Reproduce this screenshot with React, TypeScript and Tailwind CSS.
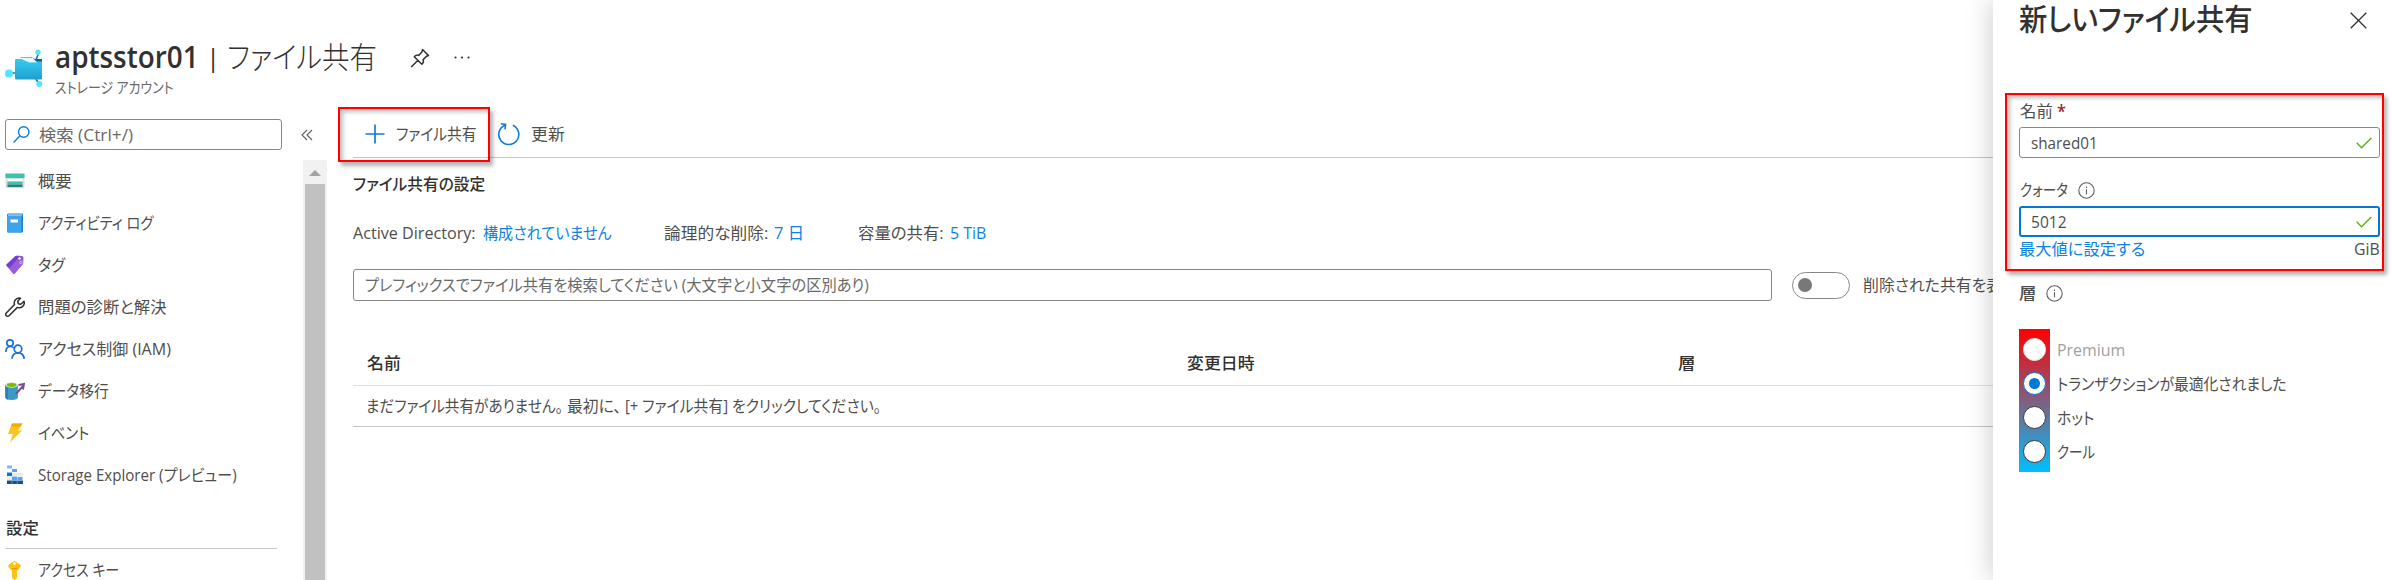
import { useLayoutEffect, useRef, useState, type ReactNode } from "react";

/** A single line of text, condensed or widened horizontally to occupy exactly `w` pixels. */
function Fit({ w, className = "", children }: { w: number; className?: string; children: string }) {
  const inner = useRef<HTMLSpanElement>(null);
  const [scale, setScale] = useState(1);
  useLayoutEffect(() => {
    const natural = inner.current!.offsetWidth;
    if (natural > 0) setScale(w / natural);
  }, [w]);
  return (
    <span className={`inline-block shrink-0 whitespace-nowrap ${className}`} style={{ width: w }}>
      <span
        ref={inner}
        className="inline-block origin-left [font-feature-settings:'palt']"
        style={{ transform: `scaleX(${scale})` }}
      >
        {children}
      </span>
    </span>
  );
}

function FolderIcon() {
  return (
    <svg className="shrink-0" width="38" height="40" viewBox="0 0 38 40">
      <defs>
        <linearGradient id="folder" x1="0" y1="0" x2="0" y2="1">
          <stop offset="0" stopColor="#35cdf2" />
          <stop offset="1" stopColor="#1f9fcf" />
        </linearGradient>
      </defs>
      <path d="M4 24h8M31 11l3-8M31 30l3 5" stroke="#1b6fb0" strokeWidth="1.6" />
      <path d="M16 8.5h11l3 1.5h7v20H12V12z" fill="#0f5ea8" />
      <path d="M15 9h12l5 6-17-1z" fill="#fff" />
      <path d="M10 11q0-1 1-1h6l5 2.500h15V29q0 1.500-1.500 1.500h-24Q10 30.500 10 29z" fill="url(#folder)" />
      <path d="M19 9h9l4 4.500h-8z" fill="#e8f8fd" />
      <circle cx="4" cy="24.500" r="4" fill="#50e6ff" />
      <circle cx="33" cy="3.300" r="2.700" fill="#50e6ff" />
      <circle cx="34.300" cy="35" r="3" fill="#50e6ff" />
    </svg>
  );
}

const Pin = () => (
  <svg width="20" height="20" viewBox="0 0 20 20" fill="none" stroke="#323130" strokeWidth="1.500" strokeLinejoin="round">
    <path d="M12.500 1.500l6 6-2 .8-3.300 3.300q.8 2.600-1.400 4.600L4.300 8.700q2-2.200 4.600-1.500l3-3.300zM8 12.300L1.200 19" />
  </svg>
);

const Info = () => (
  <svg width="17" height="17" viewBox="0 0 17 17" fill="none" stroke="#605e5c" strokeWidth="1.100">
    <circle cx="8.500" cy="8.500" r="7.700" />
    <path d="M8.500 7.300v5M8.500 4.600v1.300" />
  </svg>
);

const Check = () => (
  <svg width="16" height="12" viewBox="0 0 16 12" fill="none" stroke="#5fb01c" strokeWidth="1.500">
    <path d="M.7 5.800l4.800 4.900L15.300 1" />
  </svg>
);

const icons: Record<string, ReactNode> = {
  overview: (
    <>
      <path d="M.5 3h19v14h-19z" fill="#dcdcdc" />
      <path d="M.5 2.500h19V7h-19z" fill="#37c2b1" />
      <path d="M2.500 8h15v2.500h-15z" fill="#fff" />
      <path d="M2.500 10.500h15v3h-15z" fill="#37c2b1" />
      <path d="M2.500 13.500h15v2.500h-15z" fill="#258277" />
    </>
  ),
  log: (
    <>
      <path d="M3.500.5H17q1 0 1 1v17q0 1-1 1H3.500q-1.500 0-1.500-1.500V2Q2 .5 3.500.5z" fill="#1f7fd0" />
      <path d="M4 2.500h12.500v17H3.500q-1.500 0-1.500-1.500V3z" fill="#3ea3ea" />
      <path d="M3 1.500h14v1H3z" fill="#d8ecfa" />
      <path d="M5.500 6.500h7.500v3H5.500z" fill="#fff" />
    </>
  ),
  tag: (
    <>
      <path d="M1.500 9.500L10 1.500q.8-.7 2-.7l5 .2q1.500.1 1.500 1.500l-.2 5.500q0 1-.8 1.700l-8 9.300q-.6.600-1.200 0l-6.800-8.200q-.6-.7 0-1.300z" fill="#9a5fd6" />
      <path d="M1.500 9.500L10 1.500q.8-.7 2-.7l3 .1L4.500 13 1.500 10.800z" fill="#773adc" />
      <circle cx="14.500" cy="3.500" r="1.700" fill="#fff" stroke="#7a3fd0" strokeWidth=".8" />
      <circle cx="16" cy="7.500" r="1.300" fill="none" stroke="#d9c3f3" strokeWidth=".8" />
    </>
  ),
  wrench: (
    <path
      d="M15.500 1.200a5 5 0 0 0-6 6.300L1.300 16a1.900 1.900 0 0 0 2.700 2.700l8.400-8.300a5 5 0 0 0 6.600-6.200l-3.200 3.100-2.500-.500-.6-2.500z"
      fill="none" stroke="#323130" strokeWidth="1.500" strokeLinejoin="round"
    />
  ),
  people: (
    <g fill="none" stroke="#1a6fe0" strokeWidth="1.700">
      <circle cx="5" cy="4" r="3.200" />
      <circle cx="13" cy="10" r="3.800" />
      <path d="M.8 13q.2-5.500 4.600-5.500 2 0 3.300 1.300M7 19.800q.5-6 6-6t6.200 6" />
    </g>
  ),
  migrate: (
    <>
      <path d="M.3 4v12q0 3 6.300 3t6.300-3V4z" fill="#3a99c9" />
      <path d="M.3 4v12q0 2 2.700 2.700V4z" fill="#2e7fae" />
      <ellipse cx="6.600" cy="4" rx="6.300" ry="2.800" fill="#d6e8c0" />
      <ellipse cx="6.600" cy="4" rx="4.800" ry="1.900" fill="#7fba00" />
      <path d="M11 13l7-8M13.500 4l5.500-1-1 5.500" fill="none" stroke="#804998" strokeWidth="1.900" />
    </>
  ),
  bolt: (
    <>
      <path d="M7 .5h10.500l-4.500 7h4L5 19.500l3-8.500H3z" fill="#fcc419" />
      <path d="M7 .5h10.500l-2 3H6z" fill="#f5a900" />
    </>
  ),
  explorer: (
    <>
      <path d="M2 .5h5v3H2z" fill="#83b9f9" />
      <path d="M7 4h5v3H7z" fill="#5ea0ef" />
      <path d="M2 7.500h5v3.500H2z" fill="#0078d4" />
      <path d="M7 7.500h5V11H7zM12 8h6v3.500h-6zM2 11.500h5V15H2z" fill="#e8eaee" />
      <path d="M7 11.500h5V15H7zM12.500 12h5v3h-5z" fill="#5ea0ef" />
      <path d="M2 15.500h16V19H2z" fill="#0f5499" />
      <path d="M7 15.500v3.500M12.300 15.500v3.500" stroke="#7fb0e5" strokeWidth=".6" />
    </>
  ),
  key: (
    <>
      <path d="M9.500.8L15 4.500q.8.5.8 1.500t-.8 1.700L12 11v7l-2.500 2L7 18v-7L4 7.700Q3.200 7 3.200 6T4 4.500z" fill="#ffc20e" />
      <path d="M7 8h5v1.200H7z" fill="#e09b00" />
      <circle cx="9.500" cy="3.600" r="1.300" fill="#fff" />
    </>
  ),
};

function MenuItem({ icon, label, w }: { icon: string; label: string; w: number }) {
  return (
    <div className="flex h-[42px] shrink-0 items-center gap-[13px]">
      <svg className="shrink-0" width="20" height="20" viewBox="0 0 20 20">{icons[icon]}</svg>
      <Fit w={w}>{label}</Fit>
    </div>
  );
}

const menu = [
  { icon: "overview", label: "概要", w: 34 },
  { icon: "log", label: "アクティビティ ログ", w: 115 },
  { icon: "tag", label: "タグ", w: 27 },
  { icon: "wrench", label: "問題の診断と解決", w: 129 },
  { icon: "people", label: "アクセス制御 (IAM)", w: 133 },
  { icon: "migrate", label: "データ移行", w: 71 },
  { icon: "bolt", label: "イベント", w: 51 },
  { icon: "explorer", label: "Storage Explorer (プレビュー)", w: 199 },
];

function Sidebar() {
  return (
    <div className="flex w-[353px] shrink-0">
      <nav className="ml-[5px] flex w-[277px] flex-col pt-3">
        <div className="flex h-[31px] shrink-0 items-center gap-[9px] rounded-[3px] border border-[#8a8886] pl-[7px]">
          <svg width="17" height="17" viewBox="0 0 17 17" fill="none" stroke="#0f7bdc" strokeWidth="1.400">
            <circle cx="10.700" cy="6" r="5.200" />
            <path d="M7 9.800L.6 16.400" />
          </svg>
          <Fit w={94} className="text-[#6b6967]">検索 (Ctrl+/)</Fit>
        </div>
        <div className="mt-[10px] flex flex-col">
          {menu.map((m) => (
            <MenuItem key={m.label} {...m} />
          ))}
        </div>
        <div className="mt-[11px] mr-[5px] flex h-[42px] shrink-0 items-center border-b border-[#c8c6c4] pl-px font-medium text-[#323130]">
          <Fit w={33}>設定</Fit>
        </div>
        <MenuItem icon="key" label="アクセス キー" w={81} />
      </nav>
      <div className="ml-[19px] flex flex-col">
        <svg className="mt-[22px] shrink-0" width="12" height="12" viewBox="0 0 12 12" fill="none" stroke="#605e5c" strokeWidth="1.100">
          <path d="M6 1L1 6l5 5M11 1L6 6l5 5" />
        </svg>
        <div className="mt-[19px] ml-[2px] flex w-[24px] grow flex-col items-center bg-[#f1f1f1]">
          <svg className="mt-[10px] mb-[8px] shrink-0" width="12" height="6" viewBox="0 0 12 6">
            <path d="M0 6l6-6 6 6z" fill="#a3a3a3" />
          </svg>
          <div className="w-[20px] grow bg-[#c1c1c1]" />
        </div>
      </div>
    </div>
  );
}

function Main() {
  return (
    <main className="flex w-[1640px] shrink-0 flex-col overflow-hidden">
      <div className="flex h-[51px] shrink-0 items-center border-b border-[#c8c6c4] pl-3 pt-[3px]">
        <svg width="20" height="20" viewBox="0 0 20 20" stroke="#0f7bdc" strokeWidth="1.700">
          <path d="M10 .5v19M.5 10h19" />
        </svg>
        <Fit w={81} className="ml-[11px]">ファイル共有</Fit>
        <svg className="ml-[20px]" width="24" height="24" viewBox="0 0 24 24" fill="none" stroke="#0f7bdc" strokeWidth="1.600">
          <path d="M15.800 3.300A10 10 0 1 1 8 3.200M3.800 1.800L8.600 2.400 8 7.300" />
        </svg>
        <Fit w={34} className="ml-[10px]">更新</Fit>
      </div>
      <div className="mt-[10px] flex h-8 items-center font-medium text-[#323130]">
        <Fit w={132}>ファイル共有の設定</Fit>
      </div>
      <div className="mt-[17px] flex h-8 shrink-0 items-center">
        <Fit w={123}>Active Directory:</Fit>
        <Fit w={129} className="ml-[7px] text-[#0f82e0]">構成されていません</Fit>
        <Fit w={104} className="ml-[52px]">論理的な削除:</Fit>
        <Fit w={30} className="ml-[6px] text-[#0f82e0]">7 日</Fit>
        <Fit w={86} className="ml-[54px]">容量の共有:</Fit>
        <Fit w={36} className="ml-[6px] text-[#0f82e0]">5 TiB</Fit>
      </div>
      <div className="mt-[20px] flex h-8 shrink-0 items-center">
        <div className="flex h-8 w-[1419px] shrink-0 items-center rounded-[3px] border border-[#8a8886] pl-[11px] text-[#6b6967]">
          <Fit w={504}>プレフィックスでファイル共有を検索してください (大文字と小文字の区別あり)</Fit>
        </div>
        <div className="ml-5 flex h-[27px] w-[58px] shrink-0 items-center rounded-full border border-[#8a8886] pl-[5px]">
          <div className="size-[14px] rounded-full bg-[#7a7876]" />
        </div>
        <Fit w={155} className="ml-[13px]">削除された共有を表示</Fit>
      </div>
      <div className="mt-[39px] flex h-[46px] shrink-0 items-center border-b border-[#e1dfdd] pl-[14px] font-medium text-[#323130]">
        <Fit w={34} className="mr-[786px]">名前</Fit>
        <Fit w={68} className="mr-[423px]">変更日時</Fit>
        <Fit w={17}>層</Fit>
      </div>
      <div className="flex h-[41px] shrink-0 items-center border-b border-[#c8c6c4] pl-[13px]">
        <Fit w={197}>まだファイル共有がありません。</Fit>
        <Fit w={54} className="ml-[4px]">最初に、</Fit>
        <Fit w={256} className="ml-[4px]">[+ ファイル共有] をクリックしてください。</Fit>
      </div>
    </main>
  );
}

const tiers = [
  { label: "Premium", w: 68, text: "text-[#a19f9d]", ring: "border-[#e8e6e4]" },
  { label: "トランザクションが最適化されました", w: 230, text: "", ring: "border-[#0f6fd0]", on: true },
  { label: "ホット", w: 37, text: "", ring: "border-[#3b3a39]" },
  { label: "クール", w: 38, text: "", ring: "border-[#3b3a39]" },
];

function Panel() {
  return (
    <aside className="absolute inset-y-0 right-0 w-[399px] bg-white shadow-[0_0_26px_rgba(0,0,0,0.22)]">
      <div className="ml-[26px] flex w-[361px] flex-col">
        <div className="flex h-[40px] items-center justify-between pr-[13px] text-[30px] leading-[40px] font-medium text-[#323130]">
          <Fit w={234} className="-mt-[2px]">新しいファイル共有</Fit>
          <svg width="17" height="17" viewBox="0 0 17 17" stroke="#323130" strokeWidth="1.300">
            <path d="M.7.7l15.600 15.600M16.300.7L.7 16.300" />
          </svg>
        </div>
        <div className="mt-[55px] flex h-8 items-center">
          <Fit w={33} className="ml-px">名前</Fit>
          <Fit w={9} className="ml-[4px] text-[18px] font-semibold text-[#a4262c]">*</Fit>
        </div>
        <div className="flex h-[31px] items-center justify-between rounded-[3px] border border-[#8a8886] pr-[7px] pl-[11px]">
          <Fit w={67}>shared01</Fit>
          <Check />
        </div>
        <div className="mt-4 flex h-8 items-center">
          <Fit w={48} className="ml-px">クォータ</Fit>
          <span className="ml-[10px]"><Info /></span>
        </div>
        <div className="flex h-[31px] items-center justify-between rounded-[3px] border-2 border-[#0078d4] pr-[6px] pl-[10px]">
          <Fit w={36}>5012</Fit>
          <Check />
        </div>
        <div className="flex h-[24px] items-center justify-between">
          <Fit w={126} className="text-[#0f82e0]">最大値に設定する</Fit>
          <Fit w={26}>GiB</Fit>
        </div>
        <div className="mt-[16px] flex h-[32px] items-center font-medium">
          <Fit w={17}>層</Fit>
          <span className="ml-[10px]"><Info /></span>
        </div>
        <div className="mt-[20px] flex">
          <div className="flex w-[31px] flex-col items-center gap-[11px] bg-linear-to-b/srgb from-[#ff0000] to-[#00bfff] pt-[9px] pb-[9px]">
            {tiers.map((t) => (
              <div key={t.label} className={`flex size-[23px] items-center justify-center rounded-full border bg-white ${t.ring}`}>
                {t.on && <div className="size-[11px] rounded-full bg-[#0078d4]" />}
              </div>
            ))}
          </div>
          <div className="ml-[7px] flex flex-col pt-[4px]">
            {tiers.map((t) => (
              <div key={t.label} className={`flex h-[34px] items-center ${t.text}`}>
                <Fit w={t.w}>{t.label}</Fit>
              </div>
            ))}
          </div>
        </div>
      </div>
    </aside>
  );
}

const highlight = "absolute border-2 border-[#ff0000] shadow-[3px_4px_4px_rgba(0,0,0,0.3),inset_3px_3px_4px_rgba(0,0,0,0.25)]";

export default function App() {
  return (
    <div className="relative flex h-[580px] w-[2392px] flex-col overflow-hidden bg-white font-['Open_Sans','Noto_Sans_CJK_JP',sans-serif] text-[16.4px] leading-[24px] text-[#504e4c]">
      <header className="flex h-[107px] shrink-0 pl-[5px] pt-[37px]">
        <div className="pt-[12px]"><FolderIcon /></div>
        <div className="ml-[12px] flex flex-col">
          <div className="flex h-[40px] items-center text-[30px] leading-[40px] text-[#323130]">
            <Fit w={144} className="font-semibold">aptsstor01</Fit>
            <span className="w-[28px] text-center text-[25px]">|</span>
            <Fit w={150} className="font-light">ファイル共有</Fit>
            <span className="ml-[33px] pt-[1px]"><Pin /></span>
            <svg className="ml-[24px]" width="17" height="3" viewBox="0 0 17 3" fill="#323130">
              <circle cx="1.500" cy="1.500" r="1.100" />
              <circle cx="8" cy="1.500" r="1.100" />
              <circle cx="14.500" cy="1.500" r="1.100" />
            </svg>
          </div>
          <Fit w={119} className="-mt-px text-[15px] leading-[22px] text-[#6b6967]">ストレージ アカウント</Fit>
        </div>
      </header>
      <div className="flex grow overflow-hidden">
        <Sidebar />
        <Main />
      </div>
      <Panel />
      <div className={`${highlight} left-[338px] top-[107px] h-[55px] w-[152px]`} />
      <div className={`${highlight} left-[2005px] top-[93px] h-[178px] w-[379px]`} />
    </div>
  );
}
